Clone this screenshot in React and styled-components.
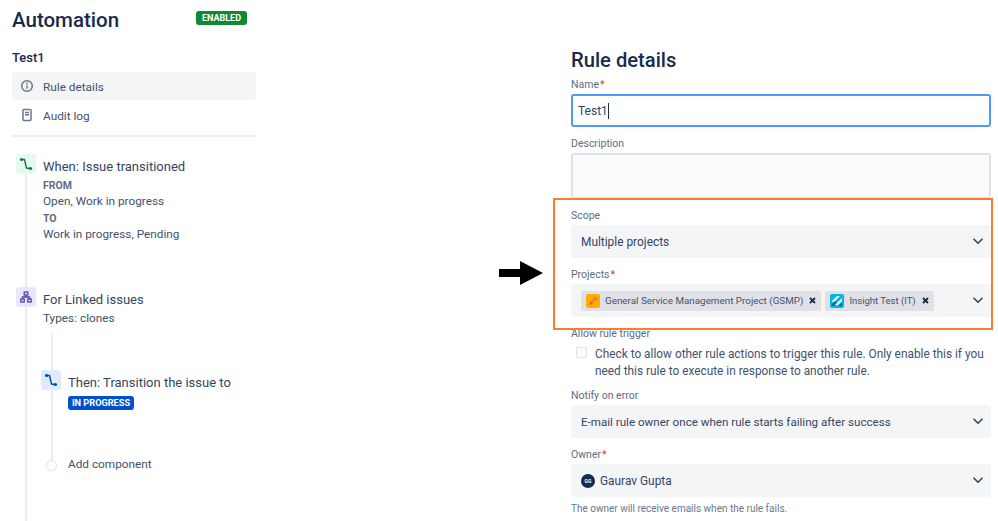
import React from 'react';
import styled, { createGlobalStyle } from 'styled-components';

const GlobalStyle = createGlobalStyle`
  html, body {
    margin: 0;
    padding: 0;
    background: #fff;
  }
  body {
    font-family: Roboto, "Open Sans", "Liberation Sans", sans-serif;
    color: #42526e;
    overflow: hidden;
  }
`;

function Chevron() {
  return (
    <ChevronSvg viewBox="0 0 10 7">
      <path d="M1 1.2 L5 5.2 L9 1.2" fill="none" stroke="#344563" strokeWidth="1.6" strokeLinecap="round" strokeLinejoin="round" />
    </ChevronSvg>
  );
}

function TransitionIcon({ color }) {
  return (
    <svg width="14" height="14" viewBox="0 0 14 14" fill="none">
      <circle cx="2.5" cy="2.5" r="1.6" fill={color} />
      <circle cx="11.5" cy="11.5" r="1.6" fill={color} />
      <path d="M3 2.5 H5.5 L7.5 11 L11 11.5" stroke={color} strokeWidth="1.4" />
    </svg>
  );
}

function HierarchyIcon() {
  return (
    <svg width="12" height="12" viewBox="0 0 12 12" fill="none" stroke="#5243aa" strokeWidth="1.3">
      <rect x="4.2" y="1" width="3.6" height="3" />
      <rect x="0.8" y="8" width="3.4" height="3" />
      <rect x="7.8" y="8" width="3.4" height="3" />
      <path d="M6 4 V6 M2.5 8 V6 H9.5 V8" />
    </svg>
  );
}

function InfoIcon() {
  return (
    <svg width="14" height="14" viewBox="0 0 14 14" fill="none">
      <circle cx="7" cy="7" r="5.3" stroke="#6b778c" strokeWidth="1.5" />
      <path d="M7 6.4 V9.8" stroke="#6b778c" strokeWidth="1.5" />
      <circle cx="7" cy="4.5" r="0.9" fill="#6b778c" />
    </svg>
  );
}

function PageIcon() {
  return (
    <svg width="14" height="14" viewBox="0 0 14 14" fill="none">
      <rect x="3" y="1.5" width="8" height="11" rx="1" stroke="#6b778c" strokeWidth="1.5" />
      <path d="M5 4.5 H9 M5 6.8 H9" stroke="#6b778c" strokeWidth="1.4" />
    </svg>
  );
}

function RemoveIcon() {
  return (
    <svg width="7" height="7" viewBox="0 0 7 7">
      <path d="M1 1 L6 6 M6 1 L1 6" stroke="#172b4d" strokeWidth="1.8" />
    </svg>
  );
}

function PencilLogo() {
  return (
    <LogoSvg viewBox="0 0 14 14">
      <rect width="14" height="14" rx="2" fill="#ffab00" />
      <path d="M3 11 L4 8 L9.5 3 L11.3 4.8 L6 10 Z" fill="#f4511e" />
      <path d="M5 8.2 L9.5 4 M6 9 L10.2 5" stroke="#ffd27a" strokeWidth="0.6" />
    </LogoSvg>
  );
}

function InsightLogo() {
  return (
    <LogoSvg viewBox="0 0 14 14">
      <rect width="14" height="14" rx="2" fill="#00b8d9" />
      <path d="M2 7 L7 2 H10 L3 9 Z M5 11 L12 4 V7 L8 11 Z" fill="#fff" />
      <path d="M2 10 L5 7 L6.5 8.5 L4 12 H2 Z" fill="#0c66a8" />
      <path d="M8.5 12 L12 8.5 V12 Z" fill="#0c66a8" />
    </LogoSvg>
  );
}

function Arrow() {
  return (
    <ArrowSvg viewBox="0 0 44 24">
      <path d="M0 8 H21 V0 L44 12 L21 24 V16 H0 Z" fill="#000" />
    </ArrowSvg>
  );
}

function Field({ label, required, children }) {
  return (
    <FieldWrap>
      <Label>
        {label}
        {required && <Star>*</Star>}
      </Label>
      {children}
    </FieldWrap>
  );
}

function App() {
  return (
    <Page>
      <GlobalStyle />
      <Sidebar>
        <Header>
          <Title>Automation</Title>
          <EnabledBadge>ENABLED</EnabledBadge>
        </Header>
        <RuleName>Test1</RuleName>
        <NavItem $active>
          <NavIcon><InfoIcon /></NavIcon>
          <NavText>Rule details</NavText>
        </NavItem>
        <NavItem>
          <NavIcon><PageIcon /></NavIcon>
          <NavText>Audit log</NavText>
        </NavItem>
        <Divider />
        <Timeline>
          <Step $height="133px">
            <StepIcon $bg="#e3fcef"><TransitionIcon color="#216e4e" /></StepIcon>
            <StepBody>
              <StepTitle>When: Issue transitioned</StepTitle>
              <SmallHead>FROM</SmallHead>
              <StepText>Open, Work in progress</StepText>
              <SmallHead>TO</SmallHead>
              <StepText>Work in progress, Pending</StepText>
            </StepBody>
          </Step>
          <Step $height="46px">
            <StepIcon $bg="#eae6ff"><HierarchyIcon /></StepIcon>
            <StepBody>
              <StepTitle>For Linked issues</StepTitle>
              <StepText>Types: clones</StepText>
            </StepBody>
          </Step>
          <Branch>
            <Step $height="87px" $inner>
              <StepIcon $bg="#deebff"><TransitionIcon color="#0747a6" /></StepIcon>
              <StepBody>
                <StepTitle>Then: Transition the issue to</StepTitle>
                <StatusBadge>IN PROGRESS</StatusBadge>
              </StepBody>
            </Step>
            <AddRow>
              <AddDot />
              <StepText>Add component</StepText>
            </AddRow>
          </Branch>
        </Timeline>
      </Sidebar>

      <Details>
        <Heading>Rule details</Heading>
        <Field label="Name" required>
          <NameInput>Test1<Caret /></NameInput>
        </Field>
        <Field label="Description">
          <DescriptionBox />
        </Field>
        <Field label="Scope">
          <Select>
            <SelectValue>Multiple projects</SelectValue>
            <Chevron />
          </Select>
        </Field>
        <Field label="Projects" required>
          <Select>
            <Tag>
              <PencilLogo />
              <TagText>General Service Management Project (GSMP)</TagText>
              <RemoveIcon />
            </Tag>
            <Tag>
              <InsightLogo />
              <TagText $size="9.5px">Insight Test (IT)</TagText>
              <RemoveIcon />
            </Tag>
            <Chevron />
          </Select>
        </Field>
        <Field label="Allow rule trigger">
          <CheckRow>
            <CheckBox />
            <CheckText>
              Check to allow other rule actions to trigger this rule. Only enable this if you need this rule to execute in response to another rule.
            </CheckText>
          </CheckRow>
        </Field>
        <Field label="Notify on error">
          <Select>
            <SelectValue $size="11.6px">E-mail rule owner once when rule starts failing after success</SelectValue>
            <Chevron />
          </Select>
        </Field>
        <Field label="Owner" required>
          <Select>
            <Avatar>GG</Avatar>
            <SelectValue>Gaurav Gupta</SelectValue>
            <Chevron />
          </Select>
          <Hint>The owner will receive emails when the rule fails.</Hint>
        </Field>
      </Details>

      <Highlight />
      <Arrow />
    </Page>
  );
}

const Page = styled.div`
  position: relative;
  width: 998px;
  height: 521px;
  overflow: hidden;
  display: flex;
  padding-left: 12px;
  box-sizing: border-box;
`;

const Sidebar = styled.div`
  width: 244px;
  flex-shrink: 0;
  margin-right: 315px;
`;

const Header = styled.div`
  display: flex;
  justify-content: space-between;
  align-items: flex-start;
  padding-top: 6px;
  height: 42px;
  width: 235px;
  box-sizing: border-box;
`;

const Title = styled.h1`
  margin: 0;
  font-size: 20.5px;
  font-weight: 500;
  line-height: 28px;
  height: 28px;
  color: #172b4d;
`;

const EnabledBadge = styled.span`
  margin-top: 5px;
  height: 14px;
  width: 51px;
  background: #108a32;
  color: #fff;
  border-radius: 3px;
  font-size: 9px;
  font-weight: 700;
  line-height: 14px;
  text-align: center;
`;

const RuleName = styled.div`
  height: 30px;
  line-height: 32px;
  font-size: 13px;
  font-weight: 500;
  color: #172b4d;
`;

const NavItem = styled.div`
  height: 28px;
  margin-bottom: 1px;
  display: flex;
  align-items: center;
  border-radius: 3px;
  background: ${p => (p.$active ? '#f4f5f7' : 'transparent')};
`;

const NavText = styled.span`
  padding-top: 2px;
  font-size: 11.8px;
  color: #42526e;
`;

const NavIcon = styled.span`
  width: 31px;
  padding-left: 8px;
  box-sizing: border-box;
  display: flex;
`;

const Divider = styled.div`
  height: 2px;
  margin-top: 6px;
  background: #ebecf0;
`;

const Timeline = styled.div`
  margin: 17px 0 0 13px;
  border-left: 2px solid #ebecf0;
  height: 500px;
`;

const Step = styled.div`
  display: flex;
  gap: 7px;
  margin-left: ${p => (p.$inner ? '-12px' : '-11px')};
  height: ${p => p.$height};
`;

const StepIcon = styled.div`
  width: 20px;
  height: 20px;
  flex-shrink: 0;
  border-radius: 3px;
  display: flex;
  align-items: center;
  justify-content: center;
  background: ${p => p.$bg};
`;

const StepBody = styled.div`
  display: flex;
  flex-direction: column;
  align-items: flex-start;
  padding-top: 2px;
`;

const StepTitle = styled.div`
  font-size: 13px;
  line-height: 22px;
  height: 22px;
  color: #344563;
`;

const StepText = styled.div`
  font-size: 11.8px;
  line-height: 15px;
  height: 16.5px;
  color: #42526e;
`;

const SmallHead = styled.div`
  font-size: 10.5px;
  font-weight: 700;
  line-height: 16px;
  height: 16px;
  color: #5e6c84;
`;

const Branch = styled.div`
  margin-left: 24px;
  border-left: 2px solid #ebecf0;
  height: 130px;
  padding-top: 37px;
  box-sizing: border-box;
`;

const StatusBadge = styled.span`
  margin-top: 2px;
  height: 14px;
  width: 66px;
  background: #0052cc;
  color: #fff;
  border-radius: 3px;
  font-size: 9.2px;
  font-weight: 700;
  line-height: 14px;
  text-align: center;
  white-space: nowrap;
`;

const AddRow = styled.div`
  display: flex;
  align-items: center;
  gap: 11px;
  margin-left: -7px;
`;

const AddDot = styled.span`
  width: 11px;
  height: 11px;
  box-sizing: border-box;
  border-radius: 50%;
  border: 1.5px solid #dfe1e6;
  background: #fff;
`;

const Details = styled.div`
  width: 420px;
  flex-shrink: 0;
  padding-top: 46px;
`;

const Heading = styled.h2`
  margin: 0 0 2px;
  font-size: 20.2px;
  font-weight: 500;
  line-height: 28px;
  height: 28px;
  color: #172b4d;
`;

const FieldWrap = styled.div`
  margin-bottom: 8px;
`;

const Label = styled.div`
  font-size: 10.5px;
  font-weight: 400;
  line-height: 18px;
  height: 16px;
  margin-bottom: 2px;
  color: #5e6c84;
`;

const Star = styled.span`
  margin-left: 1px;
  color: #de350b;
`;

const NameInput = styled.div`
  height: 33px;
  box-sizing: border-box;
  border: 2px solid #4c9aff;
  border-radius: 3px;
  padding-left: 5px;
  display: flex;
  align-items: center;
  font-size: 12px;
  color: #344563;
`;

const Caret = styled.span`
  width: 1px;
  height: 16px;
  background: #172b4d;
`;

const DescriptionBox = styled.div`
  height: 46px;
  box-sizing: border-box;
  background: #fafbfc;
  border: 2px solid #dfe1e6;
  border-radius: 3px;
`;

const Select = styled.div`
  height: 33px;
  background: #f4f5f7;
  border-radius: 3px;
  padding: 0 8px 0 10px;
  display: flex;
  align-items: center;
  gap: 4px;
`;

const SelectValue = styled.span`
  padding-top: 1px;
  font-size: ${p => p.$size || '11.9px'};
  color: #344563;
`;

const ChevronSvg = styled.svg`
  width: 10px;
  height: 7px;
  margin-left: auto;
`;

const Tag = styled.span`
  height: 20px;
  display: flex;
  align-items: center;
  padding: 0 5px;
  background: #dfe1e6;
  border-radius: 2px;
`;

const TagText = styled.span`
  font-size: ${p => p.$size || '9.85px'};
  color: #42526e;
  margin: 0 6px 0 5px;
  white-space: nowrap;
`;

const LogoSvg = styled.svg`
  width: 14px;
  height: 14px;
  flex-shrink: 0;
`;

const CheckRow = styled.div`
  display: flex;
  gap: 8px;
  height: 36px;
  box-sizing: border-box;
  padding: 3px 0 0 5px;
`;

const CheckBox = styled.span`
  width: 11px;
  height: 11px;
  box-sizing: border-box;
  margin-top: 1px;
  flex-shrink: 0;
  border: 1.5px solid #dfe1e6;
  border-radius: 2px;
  background: #fafbfc;
`;

const CheckText = styled.div`
  font-size: 11.85px;
  line-height: 17px;
  color: #42526e;
`;

const Avatar = styled.span`
  width: 14px;
  height: 14px;
  margin-right: 1px;
  border-radius: 50%;
  background: #172b4d;
  color: #fff;
  font-size: 5px;
  font-weight: 700;
  display: flex;
  align-items: center;
  justify-content: center;
`;

const Hint = styled.div`
  margin-top: 3px;
  font-size: 10px;
  line-height: 18px;
  height: 16px;
  color: #6b778c;
`;

const Highlight = styled.div`
  position: absolute;
  left: 553px;
  top: 198px;
  width: 440px;
  height: 132px;
  box-sizing: border-box;
  border: 2px solid #fb7c2c;
  pointer-events: none;
`;

const ArrowSvg = styled.svg`
  position: absolute;
  left: 499px;
  top: 261px;
  width: 44px;
  height: 24px;
`;

export default App;
